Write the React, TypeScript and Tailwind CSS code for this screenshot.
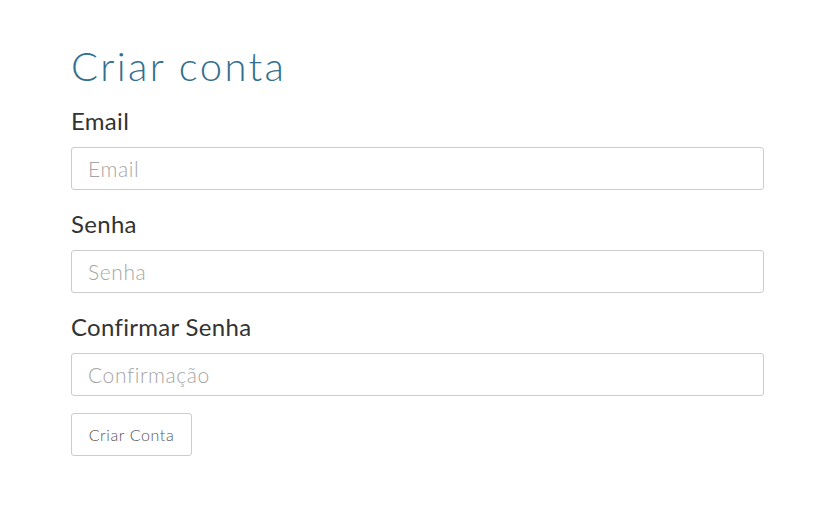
const fields = [
  { id: "email", label: "Email", placeholder: "Email", type: "email", gap: "mb-[19px]" },
  { id: "senha", label: "Senha", placeholder: "Senha", type: "password", gap: "mb-[19px]" },
  { id: "confirmacao", label: "Confirmar Senha", placeholder: "Confirmação", type: "password", gap: "mb-[17px]" },
];

const App = () => {
  return (
    <div className="min-h-screen bg-white font-['Lato','Open_Sans',sans-serif]">
      <div className="ml-[71px] w-[693px] pt-[42px]">
        <h1 className="text-[40px] leading-[48px] font-light tracking-[2.4px] text-[#33708f] mb-[16px]">Criar conta</h1>

        <form className="flex flex-col" onSubmit={(e) => e.preventDefault()}>
          {fields.map((f) => (
            <div key={f.id} className={`flex flex-col ${f.gap}`}>
              <label htmlFor={f.id} className="text-[24px] leading-[29px] tracking-[0.3px] text-[#333] mb-[12px]">
                {f.label}
              </label>
              <input
                id={f.id}
                type={f.type}
                placeholder={f.placeholder}
                className="h-[43px] w-full rounded-[3px] border border-[#ccc] bg-white px-[16px] text-[21px] font-light tracking-[0.6px] text-[#555] placeholder:text-[#a5a5a5] outline-none"
              />
            </div>
          ))}

          <div>
            <button
              type="submit"
              className="h-[43px] w-[121px] rounded-[3px] border border-[#ccc] bg-white text-[16px] font-light tracking-[0.6px] text-[#555]"
            >
              Criar Conta
            </button>
          </div>
        </form>
      </div>
    </div>
  );
};

export default App;
